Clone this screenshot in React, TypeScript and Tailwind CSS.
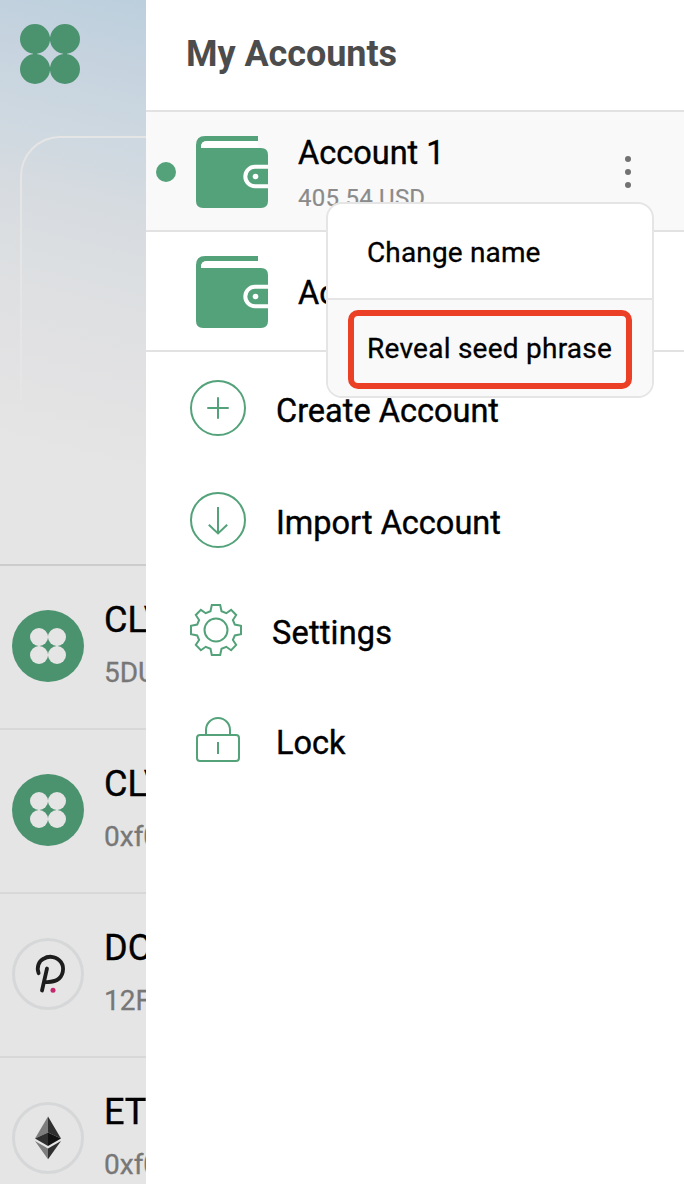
import type { ReactNode } from "react";

function Clover({ className }: { className: string }) {
  return (
    <svg viewBox="0 0 60 60" className={className} fill="currentColor">
      <circle cx="15" cy="15" r="15" />
      <circle cx="45" cy="15" r="15" />
      <circle cx="15" cy="45" r="15" />
      <circle cx="45" cy="45" r="15" />
      <path d="M29 13h2v4h-2zM29 43h2v4h-2zM13 29h4v2h-4zM43 29h4v2h-4z" />
    </svg>
  );
}

function CloverToken() {
  return (
    <div className="flex size-[72px] shrink-0 items-center justify-center rounded-full bg-[#4b936f] text-[#e5e5e5]">
      <Clover className="size-9" />
    </div>
  );
}

function DotToken() {
  return (
    <div className="size-[72px] shrink-0 rounded-full border-[3px] border-[#d6d7d8]">
      <svg viewBox="3 3 66 66" className="size-full" fill="none">
        <path
          d="M26.6 35.2C24.3 29 27 23 31.5 20.8C37 17.2 45 18.5 49 24.2C53 30 51 38.5 45 42C42 43.8 38 43.8 33.5 44.2M35 30.5L30 52.5"
          stroke="#1d1d1d"
          strokeWidth="3.8"
          strokeLinecap="round"
          strokeLinejoin="round"
        />
        <circle cx="41" cy="52.3" r="2.5" fill="#c4276d" />
      </svg>
    </div>
  );
}

function EthToken() {
  return (
    <div className="size-[72px] shrink-0 rounded-full border-[3px] border-[#d6d7d8]">
      <svg viewBox="3 3 66 66" className="size-full">
        <path d="M36 14.5V30.6L23 36.5Z" fill="#7d7d7d" />
        <path d="M36 14.5V30.6L49 36.5Z" fill="#303030" />
        <path d="M36 30.6V44L23 36.5Z" fill="#303030" />
        <path d="M36 30.6V44L49 36.5Z" fill="#121212" />
        <path d="M23 39L36 46.6V57.2Z" fill="#7d7d7d" />
        <path d="M49 39L36 46.6V57.2Z" fill="#303030" />
      </svg>
    </div>
  );
}

function AssetRow({ icon, symbol, address }: { icon: ReactNode; symbol: string; address: string }) {
  return (
    <div className="flex h-[164px] shrink-0 items-center border-b-2 border-[#d8d8d8] pb-0.5 pl-3">
      {icon}
      <div className="ml-5 shrink-0 whitespace-nowrap">
        <div className="text-[36px] leading-[52px] text-black [-webkit-text-stroke:0.4px]">{symbol}</div>
        <div className="pt-px text-[28px] leading-[52px] text-[#777777] [-webkit-text-stroke:0.3px]">{address}</div>
      </div>
    </div>
  );
}

function Wallet() {
  return (
    <svg viewBox="0 0 72 72" className="size-[72px] shrink-0">
      <path
        d="M9 0H62V5H11Q5 5 5 11V12H65Q72 12 72 19V65Q72 72 65 72H7Q0 72 0 65V9Q0 0 9 0Z"
        fill="#53a27a"
      />
      <path d="M5 12V11Q5 5 11 5H62V11.5H5Z" fill="white" />
      <path d="M72 30.8H59a9.7 9.7 0 0 0 0 19.4H72" fill="none" stroke="white" strokeWidth="4" />
      <circle cx="59.5" cy="40.5" r="2.8" fill="white" />
    </svg>
  );
}

function CreateIcon() {
  return (
    <svg viewBox="0 0 56 56" className="size-14 shrink-0" fill="none" stroke="#53a27a" strokeWidth="2">
      <circle cx="28" cy="28" r="27" />
      <path d="M28 17.3V38.7M17.3 28H38.7" />
    </svg>
  );
}

function ImportIcon() {
  return (
    <svg viewBox="0 0 56 56" className="size-14 shrink-0" fill="none" stroke="#53a27a" strokeWidth="2">
      <circle cx="28" cy="28" r="27" />
      <path d="M28 15V41.5M18.8 32.7L28 41.4L37.2 32.7" />
    </svg>
  );
}

function GearIcon() {
  return (
    <svg viewBox="0 0 52 52" className="size-[52px] shrink-0" fill="none" stroke="#53a27a" strokeWidth="2">
      <path d="M21.8 1H30.2L31.5 7.2L36.3 9.2L41.1 5.9L46.2 11L42.9 16L44.8 20.6L51 21.8V30.2L44.8 31.4L42.9 36L46.2 41L41.1 46.2L36.3 42.8L31.5 44.8L30.2 51H21.8L20.5 44.8L15.7 42.8L10.9 46.2L5.8 41L9.1 36L7.2 31.4L1 30.2V21.8L7.2 20.6L9.1 16L5.8 11L10.9 5.9L15.7 9.2L20.5 7.2Z" />
      <circle cx="26" cy="26" r="11.5" />
    </svg>
  );
}

function LockIcon() {
  return (
    <svg viewBox="0 0 56 56" className="size-14 shrink-0" fill="none" stroke="#53a27a" strokeWidth="2">
      <rect x="7" y="23" width="42" height="26" rx="3" />
      <path d="M16 23V18a12 12 0 0 1 24 0V23M28 30V42" />
    </svg>
  );
}

function MenuRow({ icon, label, className }: { icon: ReactNode; label: string; className: string }) {
  return (
    <div className={`flex items-center pl-11 ${className}`}>
      {icon}
      <span className="ml-[30px] pt-1.5 text-[32.5px] leading-[38px] text-black [-webkit-text-stroke:0.4px]">
        {label}
      </span>
    </div>
  );
}

export default function App() {
  return (
    <div className="flex h-[1184px] w-[684px] overflow-hidden bg-white font-['Roboto',sans-serif]">
      <main className="flex w-[146px] shrink-0 flex-col overflow-hidden bg-[#e5e5e5]">
        <div className="h-[564px] shrink-0 bg-[linear-gradient(194deg,#bccfdd_0%,#c6d3df_12%,#cdd8e0_24%,#d6dbe0_36%,#dcdfe1_48%,#e1e1e3_62%,#e5e5e5_80%)] pt-6 pl-5">
          <Clover className="size-[60px] text-[#4b936f]" />
          <div className="mt-[52px] h-[264px] w-[180px] rounded-tl-[40px] border-t-2 border-l-2 border-[#e5e5e5]" />
        </div>
        <div className="border-t-2 border-[#cccccc]">
          <AssetRow icon={<CloverToken />} symbol="CLV" address="5DUx" />
          <AssetRow icon={<CloverToken />} symbol="CLV" address="0xf0" />
          <AssetRow icon={<DotToken />} symbol="DOT" address="12F5" />
          <AssetRow icon={<EthToken />} symbol="ETH" address="0xf0" />
        </div>
      </main>
      <aside className="relative w-[538px] shrink-0 bg-white">
        <header className="flex h-[110px] items-center pb-[3px] pl-10">
          <h1 className="text-[36px] font-bold leading-[42px] tracking-[-0.06px] text-[#4c4c4c]">My Accounts</h1>
        </header>
        <section className="flex h-[122px] items-center border-y-2 border-[#e2e2e2] bg-[#f9f9f9] pt-0.5 pl-2.5">
          <span className="size-5 rounded-full bg-[#53a27a]" />
          <div className="ml-5">
            <Wallet />
          </div>
          <div className="ml-[30px] grow pt-px">
            <div className="text-[32.5px] leading-[38px] text-black [-webkit-text-stroke:0.4px]">Account 1</div>
            <div className="mt-3 text-2xl leading-[28px] tracking-[0.2px] text-[#8b8b8b] [-webkit-text-stroke:0.2px]">
              405.54 USD
            </div>
          </div>
          <div className="mr-[53px] flex flex-col gap-[6.4px]">
            <span className="size-[6.4px] rounded-full bg-[#727272]" />
            <span className="size-[6.4px] rounded-full bg-[#727272]" />
            <span className="size-[6.4px] rounded-full bg-[#727272]" />
          </div>
        </section>
        <section className="flex h-[120px] items-center border-b-2 border-[#e2e2e2] pt-0.5 pl-[50px]">
          <Wallet />
          <span className="ml-[30px] pt-0.5 text-[32.5px] leading-[38px] text-black [-webkit-text-stroke:0.4px]">
            Account 2
          </span>
        </section>
        <nav>
          <MenuRow className="h-28" icon={<CreateIcon />} label="Create Account" />
          <MenuRow className="h-28" icon={<ImportIcon />} label="Import Account" />
          <MenuRow className="h-[108px] tracking-[0.2px]" icon={<GearIcon />} label="Settings" />
          <MenuRow className="h-28" icon={<LockIcon />} label="Lock" />
        </nav>
        <div className="absolute top-[202px] left-[180px] w-[328px] overflow-hidden rounded-2xl border-2 border-[#e5e5e5] bg-white">
          <div className="flex h-24 items-center border-b-2 border-[#e5e5e5] pt-[3px] pl-[39px] text-[28px] tracking-[0.15px] text-black [-webkit-text-stroke:0.3px]">
            Change name
          </div>
          <div className="h-24 bg-[#f9f9f9] pt-2.5 pl-5">
            <div className="flex h-[79px] w-[284px] items-center rounded-[10px] border-[6px] border-[#ec4026] pb-px pl-[13px] text-[28px] tracking-[0.25px] whitespace-nowrap text-black [-webkit-text-stroke:0.3px]">
              Reveal seed phrase
            </div>
          </div>
        </div>
      </aside>
    </div>
  );
}
